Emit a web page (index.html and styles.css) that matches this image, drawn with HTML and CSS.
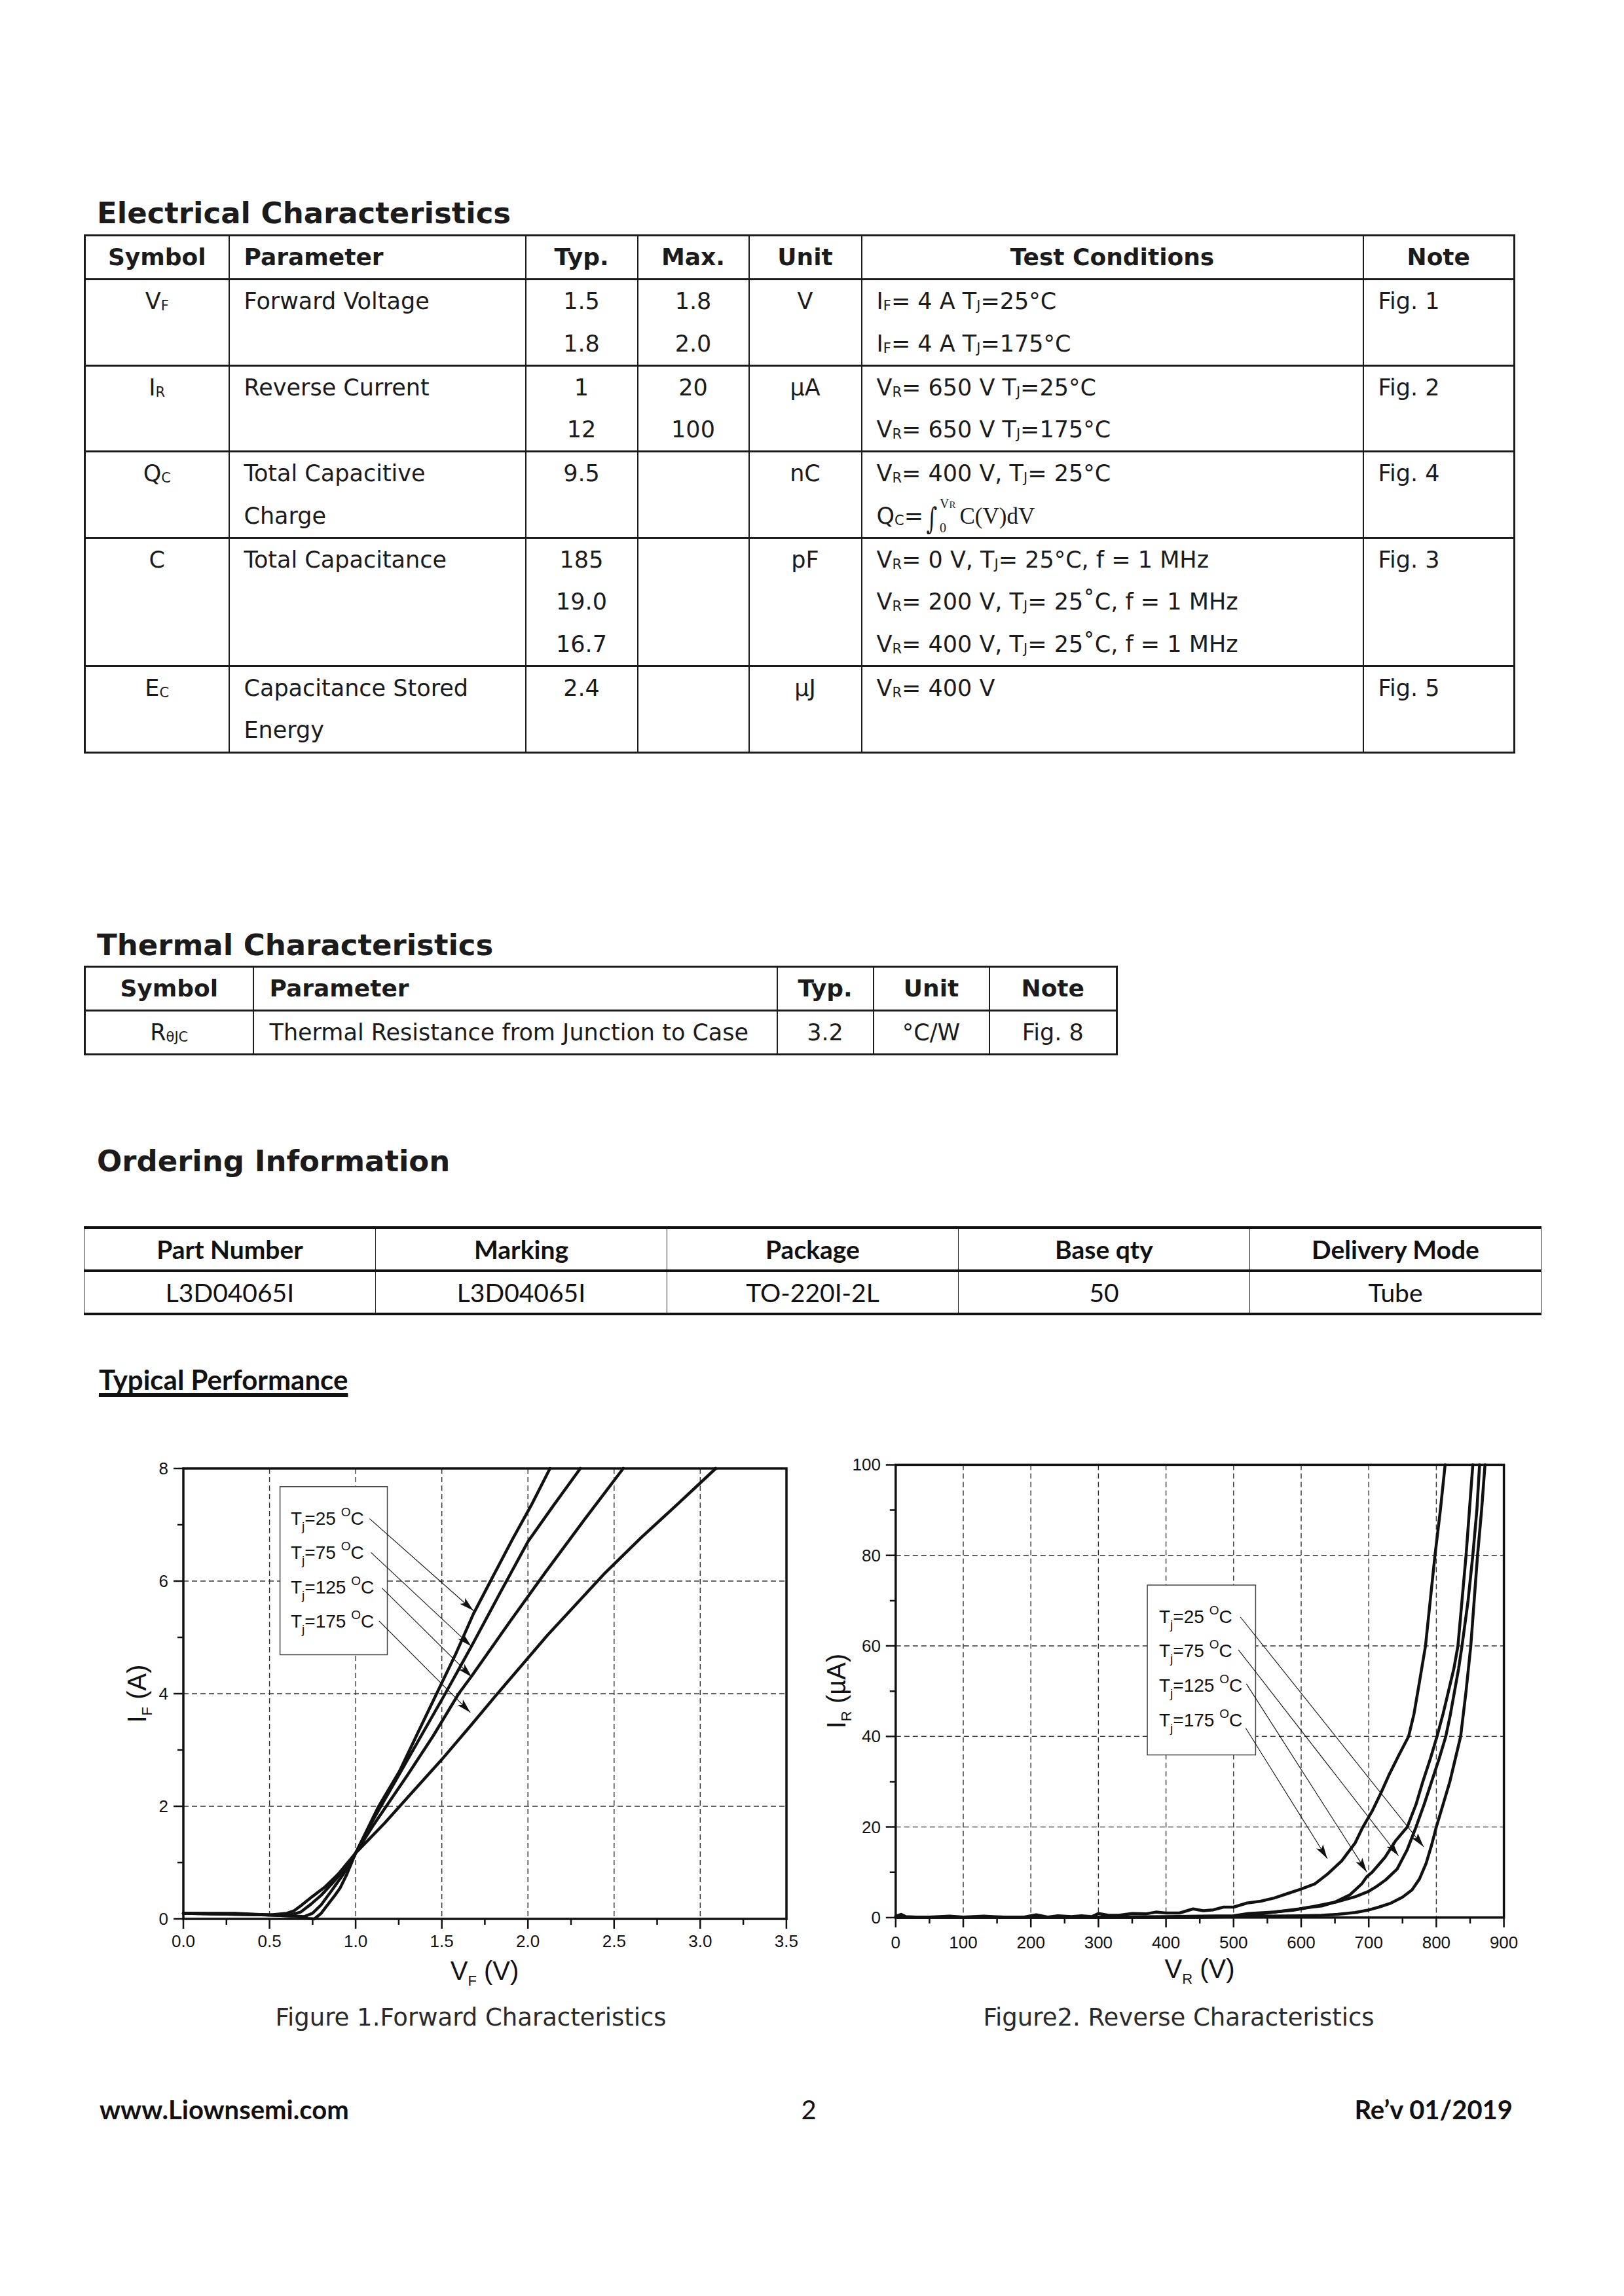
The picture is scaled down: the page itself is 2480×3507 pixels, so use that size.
FILE: index.html
```html
<!DOCTYPE html>
<html>
<head>
<meta charset="utf-8">
<title>L3D04065I datasheet page 2</title>
<link rel="stylesheet" href="styles.css">
</head>
<body>
<main class="page">
  <h2 class="sec-title t-elec">Electrical Characteristics</h2>
  <table class="grid ec">
    <colgroup><col class="w220"><col class="w453"><col class="w171"><col class="w170"><col class="w172"><col class="w766"><col class="w231"></colgroup>
    <thead>
      <tr><th>Symbol</th><th class="l">Parameter</th><th>Typ.</th><th>Max.</th><th>Unit</th><th>Test Conditions</th><th>Note</th></tr>
    </thead>
    <tbody>
      <tr>
        <td>V<span class="sb">F</span></td>
        <td class="l">Forward Voltage</td>
        <td>1.5<br>1.8</td>
        <td>1.8<br>2.0</td>
        <td>V</td>
        <td class="l">I<span class="sb">F</span>= 4 A T<span class="sb">J</span>=25°C<br>I<span class="sb">F</span>= 4 A T<span class="sb">J</span>=175°C</td>
        <td class="l">Fig. 1</td>
      </tr>
      <tr>
        <td>I<span class="sb">R</span></td>
        <td class="l">Reverse Current</td>
        <td>1<br>12</td>
        <td>20<br>100</td>
        <td>µA</td>
        <td class="l">V<span class="sb">R</span>= 650 V T<span class="sb">J</span>=25°C<br>V<span class="sb">R</span>= 650 V T<span class="sb">J</span>=175°C</td>
        <td class="l">Fig. 2</td>
      </tr>
      <tr>
        <td>Q<span class="sb">C</span></td>
        <td class="l">Total Capacitive<br>Charge</td>
        <td>9.5</td>
        <td></td>
        <td>nC</td>
        <td class="l">V<span class="sb">R</span>= 400 V, T<span class="sb">J</span>= 25°C<br>Q<span class="sb">C</span>=<span class="int">∫</span><span class="lim"><span class="up">V<span class="sb2">R</span></span><span class="lo">0</span></span><span class="mth">C(V)dV</span></td>
        <td class="l">Fig. 4</td>
      </tr>
      <tr>
        <td>C</td>
        <td class="l">Total Capacitance</td>
        <td>185<br>19.0<br>16.7</td>
        <td></td>
        <td>pF</td>
        <td class="l">V<span class="sb">R</span>= 0 V, T<span class="sb">J</span>= 25°C, f = 1 MHz<br>V<span class="sb">R</span>= 200 V, T<span class="sb">J</span>= 25˚C, f = 1 MHz<br>V<span class="sb">R</span>= 400 V, T<span class="sb">J</span>= 25˚C, f = 1 MHz</td>
        <td class="l">Fig. 3</td>
      </tr>
      <tr>
        <td>E<span class="sb">C</span></td>
        <td class="l">Capacitance Stored<br>Energy</td>
        <td>2.4</td>
        <td></td>
        <td>µJ</td>
        <td class="l">V<span class="sb">R</span>= 400 V</td>
        <td class="l">Fig. 5</td>
      </tr>
    </tbody>
  </table>

  <h2 class="sec-title t-therm">Thermal Characteristics</h2>
  <table class="grid th-tab">
    <colgroup><col class="w257"><col class="w800"><col class="w147"><col class="w177"><col class="w195"></colgroup>
    <thead>
      <tr><th>Symbol</th><th class="l l24">Parameter</th><th>Typ.</th><th>Unit</th><th>Note</th></tr>
    </thead>
    <tbody>
      <tr><td>R<span class="sb">θJC</span></td><td class="l l24">Thermal Resistance from Junction to Case</td><td>3.2</td><td>°C/W</td><td>Fig. 8</td></tr>
    </tbody>
  </table>

  <h2 class="sec-title t-ord">Ordering Information</h2>
  <table class="ord">
    <colgroup><col class="w445"><col class="w445"><col class="w445"><col class="w445"><col class="w445"></colgroup>
    <thead>
      <tr><th>Part Number</th><th>Marking</th><th>Package</th><th>Base qty</th><th>Delivery Mode</th></tr>
    </thead>
    <tbody>
      <tr><td>L3D04065I</td><td>L3D04065I</td><td>TO-220I-2L</td><td>50</td><td>Tube</td></tr>
    </tbody>
  </table>

  <h3 class="typ">Typical Performance</h3>

  <div class="figs">
    <figure class="fig fig1">
      <svg class="chart" viewBox="0 0 1100 850" width="1100" height="850">
        <defs>
          <marker id="ah1" markerUnits="userSpaceOnUse" markerWidth="24" markerHeight="12" refX="22" refY="6" orient="auto">
            <path d="M0,0 L22,6 L0,12 L5,6 z" fill="#111"/>
          </marker>
        </defs>
        <path class="gridl" d="M261.6,53V741 M393.1,53V741 M524.7,53V741 M656.2,53V741 M787.8,53V741 M919.3,53V741 M130,569H1051 M130,397H1051 M130,225H1051"/>
        <path class="tick" d="M130,741v15 M261.6,741v15 M393.1,741v15 M524.7,741v15 M656.2,741v15 M787.8,741v15 M919.3,741v15 M1050.9,741v15 M195.8,741v9 M327.4,741v9 M458.9,741v9 M590.4,741v9 M722,741v9 M853.5,741v9 M985.1,741v9 M130,741h-15 M130,569h-15 M130,397h-15 M130,225h-15 M130,53h-15 M130,655h-9 M130,483h-9 M130,311h-9 M130,139h-9"/>
        <g transform="translate(130,741) scale(263.1,-86)">
          <polyline class="curve" points="0,0.1 0.3,0.09 0.5,0.07 0.65,0.05 0.72,0.01 0.76,0 0.8,0.1 0.84,0.26 0.88,0.42 0.91,0.55 0.95,0.8 1.0,1.17 1.05,1.48 1.13,1.98 1.254,2.62 1.36,3.3 1.47,4.0 1.58,4.7 1.684,5.42 1.8,6.1 1.908,6.73 2.02,7.35 2.128,8"/>
          <polyline class="curve" points="0,0.1 0.5,0.07 0.65,0.05 0.7,0.04 0.75,0.1 0.8,0.25 0.86,0.5 0.93,0.8 1.0,1.17 1.1,1.75 1.25,2.55 1.38,3.25 1.52,4.0 1.672,4.84 1.84,5.8 2.0,6.7 2.15,7.35 2.304,8"/>
          <polyline class="curve" points="0,0.1 0.5,0.07 0.62,0.07 0.68,0.12 0.74,0.26 0.8,0.42 0.87,0.65 0.94,0.9 1.0,1.17 1.1,1.65 1.3,2.55 1.45,3.25 1.598,4.0 1.675,4.32 1.9,5.3 2.1,6.15 2.33,7.1 2.553,8"/>
          <polyline class="curve" points="0,0.1 0.3,0.1 0.5,0.07 0.6,0.1 0.64,0.14 0.685,0.24 0.75,0.4 0.823,0.57 0.9,0.8 1.0,1.17 1.168,1.7 1.3,2.15 1.5,2.83 1.667,3.43 1.82,3.99 2.114,5.04 2.44,6.12 2.66,6.78 2.87,7.37 3.09,8"/>
        </g>
        <rect class="frame" x="130" y="53" width="921" height="688"/>
        <g class="tl xl">
          <text x="130" y="784">0.0</text><text x="261.6" y="784">0.5</text><text x="393.1" y="784">1.0</text><text x="524.7" y="784">1.5</text><text x="656.2" y="784">2.0</text><text x="787.8" y="784">2.5</text><text x="919.3" y="784">3.0</text><text x="1050.9" y="784">3.5</text>
        </g>
        <g class="tl yl">
          <text x="107" y="750">0</text><text x="107" y="578">2</text><text x="107" y="406">4</text><text x="107" y="234">6</text><text x="107" y="62">8</text>
        </g>
        <text class="at" transform="translate(73,397) rotate(-90)">I<tspan class="ats" dy="9">F</tspan><tspan dy="-9"> (A)</tspan></text>
        <text class="at" x="590" y="834">V<tspan class="ats" dy="9">F</tspan><tspan dy="-9"> (V)</tspan></text>
        <rect class="legend" x="277.6" y="80.8" width="163.9" height="256.7"/>
        <text class="lg" x="294" y="139">T<tspan class="lgs" dy="9">j</tspan><tspan dy="-9">=25 </tspan><tspan class="lgs" dy="-13">O</tspan><tspan dy="13">C</tspan></text>
        <text class="lg" x="294" y="191">T<tspan class="lgs" dy="9">j</tspan><tspan dy="-9">=75 </tspan><tspan class="lgs" dy="-13">O</tspan><tspan dy="13">C</tspan></text>
        <text class="lg" x="294" y="244">T<tspan class="lgs" dy="9">j</tspan><tspan dy="-9">=125 </tspan><tspan class="lgs" dy="-13">O</tspan><tspan dy="13">C</tspan></text>
        <text class="lg" x="294" y="296">T<tspan class="lgs" dy="9">j</tspan><tspan dy="-9">=175 </tspan><tspan class="lgs" dy="-13">O</tspan><tspan dy="13">C</tspan></text>
        <g class="arrow">
          <line x1="414.3" y1="129.7" x2="572.8" y2="270" marker-end="url(#ah1)"/>
          <line x1="416.6" y1="181.3" x2="569.6" y2="324.4" marker-end="url(#ah1)"/>
          <line x1="433.3" y1="235.6" x2="570.5" y2="371.4" marker-end="url(#ah1)"/>
          <line x1="428.8" y1="285.9" x2="568.3" y2="425.8" marker-end="url(#ah1)"/>
        </g>
      </svg>
      <figcaption class="cap cap1">Figure 1.Forward Characteristics</figcaption>
    </figure>

    <figure class="fig fig2">
      <svg class="chart" viewBox="0 0 1100 850" width="1100" height="850">
        <defs>
          <marker id="ah2" markerUnits="userSpaceOnUse" markerWidth="24" markerHeight="12" refX="22" refY="6" orient="auto">
            <path d="M0,0 L22,6 L0,12 L5,6 z" fill="#111"/>
          </marker>
        </defs>
        <path class="gridl" d="M221,47.4V738.9 M324.2,47.4V738.9 M427.4,47.4V738.9 M530.6,47.4V738.9 M633.8,47.4V738.9 M737,47.4V738.9 M840.2,47.4V738.9 M943.4,47.4V738.9 M117.8,600.6H1046.6 M117.8,462.3H1046.6 M117.8,324H1046.6 M117.8,185.7H1046.6"/>
        <path class="tick" d="M117.8,738.9v15 M221,738.9v15 M324.2,738.9v15 M427.4,738.9v15 M530.6,738.9v15 M633.8,738.9v15 M737,738.9v15 M840.2,738.9v15 M943.4,738.9v15 M1046.6,738.9v15 M169.4,738.9v9 M272.6,738.9v9 M375.8,738.9v9 M479,738.9v9 M582.2,738.9v9 M685.4,738.9v9 M788.6,738.9v9 M891.8,738.9v9 M995,738.9v9 M117.8,738.9h-15 M117.8,600.6h-15 M117.8,462.3h-15 M117.8,324h-15 M117.8,185.7h-15 M117.8,47.4h-15 M117.8,669.8h-9 M117.8,531.5h-9 M117.8,393.2h-9 M117.8,254.9h-9 M117.8,116.6h-9"/>
        <g transform="translate(117.8,738.9) scale(1.032,-6.915)">
          <polyline class="curve" points="0,0.3 8,0.7 15,0.2 30,0.1 50,0.1 80,0.3 100,0.1 130,0.3 160,0.1 190,0.1 208,0.6 225,0.1 240,0.4 260,0.2 275,0.4 290,0.2 300,0.9 315,0.5 330,0.5 350,0.9 370,0.8 385,1.2 400,1.0 420,1.0 440,1.9 455,1.5 470,1.7 485,2.3 500,2.3 520,3.2 540,3.6 560,4.3 580,5.3 600,6.3 620,7.4 639,9.6 660,12.5 680,16.5 691,19.9 705,23.5 718,27.5 730,31.5 745,36 759,40 767,45 775,52 784,60 791,70 798,80 806,90 813,100"/>
          <polyline class="curve" points="0,0.1 200,0.1 300,0.1 400,0.2 450,0.3 500,0.4 522,0.9 560,1.2 588,1.6 610,2.2 632,2.6 650,3.4 672,5.0 690,7.5 697,9.0 705,10.0 724,13.3 740,17 757,20 770,25 780,30 791,35 801,40 810,45 818,50 826,55 832,60 838,70 844,80 849,90 854,100"/>
          <polyline class="curve" points="0,0.1 400,0.1 500,0.2 544,0.9 570,1.4 597,1.9 620,2.5 654,3.5 680,4.6 700,5.8 711,6.8 725,8.3 742,10.7 757,15 770,20 782,25 793,30 804,35 814,40 821,45 827,50 833,55 838,60 847,70 854,80 860,90 864,100"/>
          <polyline class="curve" points="0,0.05 450,0.05 500,0.2 550,0.3 601,0.4 630,0.5 654,0.7 680,1.1 698,1.6 715,2.3 733,3.2 750,4.5 764,6.1 775,8.5 785,12 793,16 800,20 810,25 820,30 828,35 836,40 844,50 851,60 856,70 861,80 867,90 872,100"/>
        </g>
        <rect class="frame" x="117.8" y="47.4" width="928.8" height="691.5"/>
        <g class="tl xl">
          <text x="117.8" y="786">0</text><text x="221" y="786">100</text><text x="324.2" y="786">200</text><text x="427.4" y="786">300</text><text x="530.6" y="786">400</text><text x="633.8" y="786">500</text><text x="737" y="786">600</text><text x="840.2" y="786">700</text><text x="943.4" y="786">800</text><text x="1046.6" y="786">900</text>
        </g>
        <g class="tl yl">
          <text x="95" y="748">0</text><text x="95" y="610">20</text><text x="95" y="471">40</text><text x="95" y="333">60</text><text x="95" y="195">80</text><text x="95" y="56">100</text>
        </g>
        <text class="at" transform="translate(41,393) rotate(-90)">I<tspan class="ats" dy="9">R</tspan><tspan dy="-9"> (µA)</tspan></text>
        <text class="at" x="582" y="831">V<tspan class="ats" dy="9">R</tspan><tspan dy="-9"> (V)</tspan></text>
        <rect class="legend" x="502.1" y="231.1" width="165.3" height="259.4"/>
        <text class="lg" x="520" y="289">T<tspan class="lgs" dy="9">j</tspan><tspan dy="-9">=25 </tspan><tspan class="lgs" dy="-13">O</tspan><tspan dy="13">C</tspan></text>
        <text class="lg" x="520" y="341">T<tspan class="lgs" dy="9">j</tspan><tspan dy="-9">=75 </tspan><tspan class="lgs" dy="-13">O</tspan><tspan dy="13">C</tspan></text>
        <text class="lg" x="520" y="394">T<tspan class="lgs" dy="9">j</tspan><tspan dy="-9">=125 </tspan><tspan class="lgs" dy="-13">O</tspan><tspan dy="13">C</tspan></text>
        <text class="lg" x="520" y="447">T<tspan class="lgs" dy="9">j</tspan><tspan dy="-9">=175 </tspan><tspan class="lgs" dy="-13">O</tspan><tspan dy="13">C</tspan></text>
        <g class="arrow">
          <line x1="644.3" y1="280" x2="924.1" y2="630.9" marker-end="url(#ah2)"/>
          <line x1="641.1" y1="329.8" x2="885.6" y2="644.5" marker-end="url(#ah2)"/>
          <line x1="653.3" y1="381.9" x2="837.2" y2="669.4" marker-end="url(#ah2)"/>
          <line x1="652.4" y1="449.8" x2="776.9" y2="649" marker-end="url(#ah2)"/>
        </g>
      </svg>
      <figcaption class="cap cap2">Figure2. Reverse Characteristics</figcaption>
    </figure>
  </div>

  <footer class="foot">
    <span class="foot-l">www.Liownsemi.com</span>
    <span class="foot-c">2</span>
    <span class="foot-r">Re’v 01/2019</span>
  </footer>
</main>
</body>
</html>
```

FILE: styles.css
```css
* { box-sizing: border-box; }
html, body { margin: 0; padding: 0; background: #fff; }
body {
  width: 2480px;
  height: 3507px;
  color: #1b1b1b;
  font-family: "DejaVu Sans", Verdana, sans-serif;
  overflow: hidden;
}
.page { padding: 300px 0 0 128px; }

/* section titles */
.sec-title {
  margin: 0 0 6px 20px;
  font-size: 45px;
  line-height: 52px;
  font-weight: bold;
}
.t-therm { margin-top: 267px; margin-bottom: 5px; }
.t-ord { margin-top: 136px; margin-bottom: 73px; }

/* bordered data tables */
.grid {
  border-collapse: collapse;
  table-layout: fixed;
  border: 3px solid #1b1b1b;
  font-size: 35px;
  line-height: 64.3px;
}
.grid th, .grid td {
  border-left: 2px solid #1b1b1b;
  border-right: 2px solid #1b1b1b;
  border-top: 3px solid #1b1b1b;
  border-bottom: 3px solid #1b1b1b;
  padding: 0;
  text-align: center;
  vertical-align: top;
  font-weight: normal;
  white-space: nowrap;
}
.grid th { font-weight: bold; font-size: 36px; vertical-align: middle; }
.grid .l { text-align: left; padding-left: 22px; }
.grid .l24 { padding-left: 24px; }
.ec { width: 2183px; }
.th-tab { width: 1576px; }

.w220 { width: 220px; } .w453 { width: 453px; } .w171 { width: 171px; }
.w170 { width: 170px; } .w172 { width: 172px; } .w766 { width: 766px; }
.w231 { width: 231px; }
.w257 { width: 257px; } .w800 { width: 800px; } .w147 { width: 147px; }
.w177 { width: 177px; } .w195 { width: 195px; }
.w445 { width: 445px; }

.sb { font-size: 0.6em; line-height: 1; vertical-align: -2px; }
.int {
  display: inline-block;
  font-family: "DejaVu Serif", "Liberation Serif", serif;
  font-size: 46px;
  line-height: 40px;
  vertical-align: -8px;
  transform: scaleX(0.7);
  margin-left: 1px;
}
.lim {
  display: inline-block;
  vertical-align: -13px;
  font-family: "Liberation Serif", serif;
  font-size: 20px;
  line-height: 18px;
  margin-right: 6px;
}
.lim .up { display: block; margin-bottom: 18px; }
.lim .lo { display: block; }
.sb2 { font-size: 0.75em; line-height: 1; }
.mth { font-family: "Liberation Serif", serif; font-size: 35px; line-height: 1; }

/* ordering table */
.ord {
  width: 2225px;
  border-collapse: collapse;
  table-layout: fixed;
  font-family: Lato, "Open Sans", sans-serif;
  font-size: 39px;
  line-height: 62px;
  color: #111;
  border-left: 1px solid #111;
  border-right: 1px solid #111;
}
.ord th, .ord td {
  padding: 0;
  text-align: center;
  border-left: 1px solid #222;
  border-right: 1px solid #222;
}
.ord th { font-weight: bold; border-top: 4px solid #111; border-bottom: 4px solid #111; }
.ord td { font-weight: normal; border-bottom: 4px solid #111; }

/* typical performance heading */
.typ {
  margin: 73px 0 0 23px;
  font-family: Lato, "Open Sans", sans-serif;
  font-size: 42px;
  line-height: 50px;
  font-weight: bold;
  color: #111;
  display: inline-block;
  text-decoration: underline;
  text-decoration-thickness: 6px;
  text-underline-offset: 5px;
  text-decoration-skip-ink: none;
}

/* figures */
.figs { display: flex; margin: 58px 0 0 22px; }
.fig { margin: 0; width: 1100px; }
.chart { display: block; }
.cap {
  margin-top: 20px;
  font-size: 37px;
  line-height: 44px;
  text-align: center;
  color: #2a2a2a;
}
.cap1 { padding-left: 38px; }

.gridl { fill: none; stroke: #333; stroke-width: 1.4; stroke-dasharray: 8 5; }
.tick { fill: none; stroke: #111; stroke-width: 2.5; }
.frame { fill: none; stroke: #111; stroke-width: 3.5; }
.curve {
  fill: none;
  stroke: #111;
  stroke-width: 4.5;
  stroke-linejoin: round;
  stroke-linecap: round;
  vector-effect: non-scaling-stroke;
}
.tl { font-family: "Liberation Sans", Arial, sans-serif; font-size: 26px; fill: #111; }
.xl { text-anchor: middle; }
.yl { text-anchor: end; }
.at { font-family: "Liberation Sans", Arial, sans-serif; font-size: 40px; fill: #111; text-anchor: middle; }
.ats { font-size: 22px; }
.legend { fill: #fff; stroke: #444; stroke-width: 1.5; }
.lg { font-family: "Liberation Sans", Arial, sans-serif; font-size: 28px; fill: #111; }
.lgs { font-size: 19px; }
.arrow line { stroke: #111; stroke-width: 1.1; }

/* footer */
.foot {
  display: grid;
  grid-template-columns: 1fr auto 1fr;
  width: 2182px;
  margin-top: 93px;
  padding-left: 24px;
  font-family: Lato, "Open Sans", sans-serif;
  font-size: 40px;
  line-height: 50px;
  color: #111;
}
.foot-l { font-weight: bold; }
.foot-c { padding-left: 8px; }
.foot-r { font-weight: bold; text-align: right; }
```
